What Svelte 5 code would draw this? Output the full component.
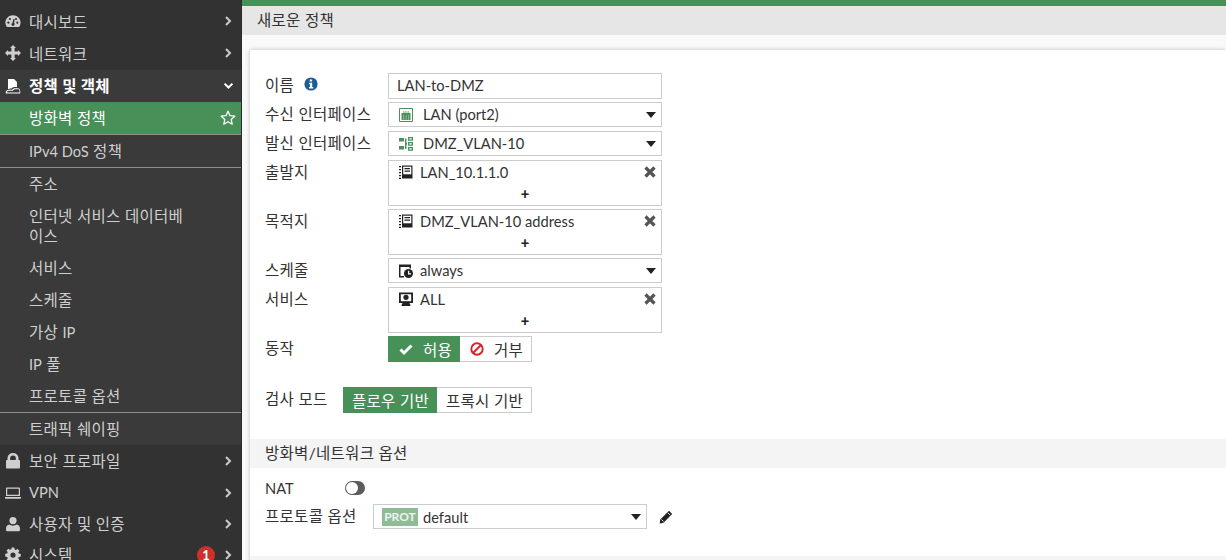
<script lang="ts">
  const topNav = [
    { label: '대시보드', icon: 'dash' },
    { label: '네트워크', icon: 'move' }
  ];
  const subNav = [
    { label: '방화벽 정책', active: true, line: true },
    { before: 'IPv4 DoS', label: '정책', line: true },
    { label: '주소' },
    { label: '인터넷 서비스 데이터베이스', tall: true },
    { label: '서비스' },
    { label: '스케줄' },
    { label: '가상', after: 'IP' },
    { before: 'IP', label: '풀' },
    { label: '프로토콜 옵션', line: true },
    { label: '트래픽 쉐이핑' }
  ];
  const bottomNav = [
    { label: '보안 프로파일', icon: 'lock' },
    { latin: 'VPN', icon: 'laptop' },
    { label: '사용자 및 인증', icon: 'user' },
    { label: '시스템', icon: 'gear', badge: 1 }
  ];
</script>

{#snippet chevron()}
  <svg class="chev" viewBox="0 0 10 14"><path d="M2.5 2 7.5 7 2.5 12" fill="none" stroke="currentColor" stroke-width="2.6"/></svg>
{/snippet}

{#snippet navIcon(name)}
  <svg class="nav-icon" viewBox="0 0 16 16" fill="currentColor">
    {#if name === 'dash'}
      <path d="M8 2.2C3.8 2.2.4 5.500.4 9.700c0 1.500.4 2.800 1.100 3.900.2.200.4.300.7.300h11.600c.3 0 .5-.1.7-.3.700-1.100 1.100-2.400 1.100-3.900 0-4.200-3.400-7.500-7.600-7.500zM3.400 10.800a1.100 1.100 0 1 1 0-2.200 1.100 1.100 0 0 1 0 2.200zm1.500-3.700a1.100 1.100 0 1 1 0-2.200 1.100 1.100 0 0 1 0 2.200zm4.400 4.800a1.500 1.500 0 0 1-2.900-.6c.1-.6.500-1 1-1.100l1-4.200h1.200l-.4 4.300c.5.300.8 1 .1 1.600zm1.700-4.800a1.100 1.100 0 1 1 0-2.200 1.100 1.100 0 0 1 0 2.200zm1.300 3.700a1.100 1.100 0 1 1 0-2.200 1.100 1.100 0 0 1 0 2.200z"/>
    {:else if name === 'move'}
      <path d="M8 0 11 3H9.600V6.400H13V5L16 8 13 11V9.600H9.600V13H11L8 16 5 13H6.400V9.600H3V11L0 8 3 5V6.400H6.400V3H5Z"/>
    {:else if name === 'policy'}
      <path d="M3 1h6l3 3v5H9.500C8 9 7 10 6.500 10.500 5 10.500 3.800 10.800 3 11.500ZM.8 15.500c-.5-2.300 1-3.800 3.400-3.800h3c.8-1 1.700-1.500 3-1.500h2.500c1.500 0 2.500 1 2.500 2.500v2.800zM2 14.400h12.500v-1.700c0-.8-.5-1.400-1.400-1.400h-2.700c-1 0-1.800.5-2.500 1.500H4.200c-1.500 0-2.300.5-2.200 1.600z"/>
    {:else if name === 'lock'}
      <path d="M2.500 7V5a5.500 5 0 0 1 11 0v2h.5c.6 0 1 .4 1 1v6.500c0 .6-.4 1-1 1H2c-.6 0-1-.4-1-1V8c0-.6.4-1 1-1zm2.700 0h5.600V5a2.800 2.500 0 0 0-5.600 0z"/>
    {:else if name === 'laptop'}
      <path d="M2 2.500h12c.6 0 1 .4 1 1V11H1V3.500c0-.6.4-1 1-1zm.2 1.200V9.800h11.600V3.700zM0 12h16v.8c0 .6-.5 1-1 1H1c-.6 0-1-.4-1-1z"/>
    {:else if name === 'user'}
      <path d="M8 1a3.600 3.600 0 1 1 0 7.200A3.600 3.600 0 0 1 8 1zM4.400 8.600C5.400 9.300 6.600 9.800 8 9.800s2.600-.5 3.600-1.200c2 .2 3.400 1.800 3.400 4v1.100c0 1-.7 1.500-1.500 1.500h-11C1.700 15.200 1 14.700 1 13.700v-1.100c0-2.200 1.400-3.800 3.400-4z"/>
    {:else}
      <path d="M6.700.5h2.600l.4 2c.4.100.8.300 1.200.5l1.700-1.100 1.800 1.800-1.100 1.700c.2.400.4.800.5 1.200l2 .4v2.600l-2 .4c-.1.400-.3.800-.5 1.200l1.100 1.700-1.800 1.800-1.700-1.100c-.4.200-.8.400-1.200.5l-.4 2H6.700l-.4-2c-.4-.1-.8-.3-1.200-.5l-1.700 1.100-1.800-1.800 1.100-1.700c-.2-.4-.4-.8-.5-1.200l-2-.4V6.800l2-.4c.1-.4.300-.8.5-1.200L1.600 3.500l1.800-1.800 1.700 1.100c.4-.2.800-.4 1.200-.5zM8 5.500a2.600 2.600 0 1 0 0 5.200 2.600 2.600 0 0 0 0-5.200z"/>
    {/if}
  </svg>
{/snippet}

{#snippet addrIcon()}
  <svg class="ico" viewBox="0 0 14 14">
    <path d="M3 .5h10.500v13H3z" fill="#222"/>
    <path d="M4.200 1.700h8.100v7.600H4.200z" fill="#fff"/>
    <path d="M5.500 3h5.500v1.200H5.500zM5.500 5.500h5.500v1.200H5.500z" fill="#222"/>
    <path d="M0 1h2v1.300H0zM0 4h2v1.300H0zM0 7h2v1.300H0zM0 10h2v1.300H0zM0 12.700h2V14H0z" fill="#222"/>
  </svg>
{/snippet}

{#snippet caret()}
  <svg class="caret" viewBox="0 0 10 6"><path d="M0 0h10L5 6z" fill="#222"/></svg>
{/snippet}

{#snippet multi(label, icon)}
  <div class="row">
    <span class="label">{label}</span>
    <div class="field multi">
      <div class="entry">
        {#if icon === 'addr'}
          {@render addrIcon()}
        {:else}
          <svg class="ico" viewBox="0 0 14 14">
            <path d="M0 .5h14v10.500h-14zM1.800 2.300v7h10.400v-7z" fill="#222"/>
            <circle cx="7" cy="5.300" r="2.600" fill="#222"/>
            <path d="M2.500 14c0-2.500 1.800-4.500 4.500-4.500s4.500 2 4.500 4.500z" fill="#222"/>
          </svg>
        {/if}
        <span class="entry-text lat">{icon === 'addr' ? (label === '출발지' ? 'LAN_10.1.1.0' : 'DMZ_VLAN-10 address') : 'ALL'}</span>
        <svg class="close" viewBox="0 0 12 12"><path d="M1.500 1.500 10.500 10.500M10.500 1.500 1.500 10.500" stroke="#555" stroke-width="3.200" fill="none"/></svg>
      </div>
      <div class="plus lat">+</div>
    </div>
  </div>
{/snippet}

<div class="page">
  <aside class="sidebar">
    {#each topNav as item}
      <div class="nav-item">
        {@render navIcon(item.icon)}
        <span class="nav-label">{item.label}</span>
        {@render chevron()}
      </div>
    {/each}

    <div class="group">
      <div class="nav-item open">
        {@render navIcon('policy')}
        <span class="nav-label raised">정책 및 객체</span>
        <svg class="chev down" viewBox="0 0 14 10"><path d="M2 2 7 7 12 2" fill="none" stroke="currentColor" stroke-width="2.600"/></svg>
      </div>
      {#each subNav as item}
        <div class="sub-item" class:active={item.active} class:line={item.line} class:tall={item.tall}>
          <span class="sub-label raised">{#if item.before}<span class="lat">{item.before}</span>{' '}{/if}{item.label}{#if item.after}{' '}<span class="lat">{item.after}</span>{/if}</span>
          {#if item.active}
            <svg class="star" viewBox="0 0 16 16"><path d="M8 1.300 10 5.700 14.800 6.200 11.200 9.400 12.200 14.200 8 11.700 3.800 14.200 4.800 9.400 1.200 6.200 6 5.700Z" fill="none" stroke="currentColor" stroke-width="1.300" stroke-linejoin="round"/></svg>
          {/if}
        </div>
      {/each}
    </div>

    <div class="bottom">
      {#each bottomNav as item}
        <div class="nav-item">
          {@render navIcon(item.icon)}
          <span class="nav-label raised">{#if item.latin}<span class="lat">{item.latin}</span>{:else}{item.label}{/if}</span>
          {#if item.badge}<span class="badge lat">{item.badge}</span>{/if}
          {@render chevron()}
        </div>
      {/each}
    </div>
  </aside>

  <main class="main">
    <div class="topbar"></div>
    <header class="title">새로운 정책</header>
    <section class="card">
      <div class="form">
        <div class="row">
          <span class="label">이름
            <svg class="info" viewBox="0 0 14 14"><circle cx="7" cy="7" r="6.600" fill="#1c5d94"/><path d="M5.700 2.600h2.400v2H5.700zM5 5.800h3.200v4.300h1v1.400H5v-1.400h1V7.200H5z" fill="#fff"/></svg>
          </span>
          <div class="field text lat">LAN-to-DMZ</div>
        </div>
        <div class="row">
          <span class="label">수신 인터페이스</span>
          <div class="field select">
            <svg class="ico port" viewBox="0 0 14 14">
              <path d="M.5.500h13v13H.5z" fill="#fff" stroke="#4a9358"/>
              <path d="M2.500 5h9v7h-9z" fill="#4a9358"/>
              <path d="M4 3h1.500v2H4zM6.300 3h1.500v2H6.300zM8.600 3h1.500v2H8.600zM4.300 7h.7v5h-.7zM6.700 7h.7v5h-.7zM9 7h.7v5H9z" fill="#9bc5a4"/>
            </svg>
            <span class="sel-text lat">LAN (port2)</span>
            {@render caret()}
          </div>
        </div>
        <div class="row">
          <span class="label">발신 인터페이스</span>
          <div class="field select">
            <svg class="ico port" viewBox="0 0 14 14" fill="#4a9358">
              <path d="M0 1h5v3.500H0zM0 9h5v3.500H0zM6 6h2v1.500H6zM6 1.500h1.500V12H6z"/>
              <path d="M9 0h5v3.800H9zM9 5h5v3.800H9zM9 10h5v3.800H9z"/>
              <path d="M10.300 1.200h2.400v1.400h-2.400zM10.300 6.200h2.400v1.400h-2.400zM10.300 11.200h2.400v1.400h-2.400z" fill="#fff"/>
            </svg>
            <span class="sel-text lat">DMZ_VLAN-10</span>
            {@render caret()}
          </div>
        </div>
        {@render multi('출발지', 'addr')}
        {@render multi('목적지', 'addr')}
        <div class="row">
          <span class="label">스케줄</span>
          <div class="field select">
            <svg class="ico" viewBox="0 0 14 14">
              <path d="M0 .500h12v4h-1.500V3H1.500v9H5v1.500H0z" fill="#222"/>
              <circle cx="9.500" cy="9.500" r="4.500" fill="#222"/>
              <path d="M9 6.800h1.200v2.400H12v1.200H9z" fill="#fff"/>
            </svg>
            <span class="sel-text near lat">always</span>
            {@render caret()}
          </div>
        </div>
        {@render multi('서비스', 'svc')}
        <div class="row">
          <span class="label">동작</span>
          <div class="toggle">
            <div class="seg on">
              <svg class="seg-ico" viewBox="0 0 14 12"><path d="M1.500 6.500 5 10 12.500 2.500" fill="none" stroke="#fff" stroke-width="3"/></svg>
              허용
            </div>
            <div class="seg">
              <svg class="seg-ico" viewBox="0 0 14 14"><circle cx="7" cy="7" r="5.700" fill="none" stroke="#d9232a" stroke-width="1.900"/><path d="M3 11 11 3" stroke="#d9232a" stroke-width="1.900"/></svg>
              거부
            </div>
          </div>
        </div>
        <div class="row inspect">
          <span class="label short">검사 모드</span>
          <div class="toggle">
            <div class="seg on flat">플로우 기반</div>
            <div class="seg flat">프록시 기반</div>
          </div>
        </div>
      </div>

      <div class="section-head">방화벽/네트워크 옵션</div>

      <div class="form options">
        <div class="row nat">
          <span class="label lat nat-label">NAT</span>
          <span class="switch"></span>
        </div>
        <div class="row">
          <span class="label short2">프로토콜 옵션</span>
          <div class="field select prot">
            <span class="prot-tag lat">PROT</span>
            <span class="prot-text lat">default</span>
            {@render caret()}
          </div>
          <svg class="pencil" viewBox="0 0 14 14"><path d="M10 .800 13.200 4 4.500 12.700.600 13.400 1.300 9.500Z" fill="#222"/><path d="M8.900 2.800 11.200 5.100M2.500 9.500 4.500 11.500" stroke="#fff" stroke-width=".9"/></svg>
        </div>
      </div>
      <div class="card-foot"></div>
    </section>
  </main>
</div>

<style>
  :global(body) {
    margin: 0;
    overflow: hidden;
  }

  .page {
    display: flex;
    width: 1226px;
    height: 560px;
    overflow: hidden;
    font-family: Lato, "Noto Sans CJK KR", sans-serif;
    font-size: 15.5px;
    letter-spacing: 0.3px;
    color: #333;
  }

  .lat {
    font-size: 14.67px;
    letter-spacing: 0;
  }

  .sidebar {
    width: 242px;
    flex-shrink: 0;
    height: 560px;
    padding-top: 5px;
    box-sizing: border-box;
    background: #323232;
    border-right: 1px solid #2a2a2a;
    color: #cfcfcf;
    overflow: hidden;
  }

  .nav-item {
    display: flex;
    align-items: center;
    height: 32px;
    padding-left: 5px;
    padding-right: 9px;
  }

  .nav-item.open {
    color: #fff;
    font-weight: 700;
  }

  .nav-icon {
    width: 16px;
    height: 16px;
    flex-shrink: 0;
    margin-right: 8px;
  }

  .nav-label {
    flex: 1;
  }

  .raised {
    padding-bottom: 2px;
  }

  .chev {
    width: 8px;
    height: 12px;
    color: #c8c8c8;
  }

  .chev.down {
    width: 11px;
    height: 8px;
    color: #fff;
    margin-right: -2px;
  }

  .badge {
    width: 18px;
    height: 18px;
    border-radius: 50%;
    background: #d0302a;
    color: #fff;
    font-size: 13px;
    font-weight: 700;
    text-align: center;
    line-height: 18px;
    margin-right: 9px;
  }

  .group {
    margin-top: 1px;
    background: #3a3a3a;
  }

  .bottom .nav-item {
    height: 31px;
  }

  .bottom .nav-item:first-child {
    height: 32px;
  }

  .sub-item {
    display: flex;
    align-items: center;
    height: 32px;
    padding: 0 5px 0 29px;
    color: #cfcfcf;
  }

  .sub-item.line {
    height: 33px;
    border-bottom: 1px solid #8e8e8e;
    box-sizing: border-box;
  }

  .sub-item.tall {
    height: 52px;
    line-height: 20px;
    word-break: break-all;
  }

  .sub-item.tall .sub-label {
    max-width: 160px;
    padding-bottom: 0;
  }

  .sub-item.active {
    background: #479058;
    color: #fff;
  }

  .sub-label {
    flex: 1;
  }

  .star {
    width: 16px;
    height: 16px;
  }

  .main {
    flex: 1;
    min-width: 0;
    background: #f9f9f9;
  }

  .topbar {
    height: 6px;
    background: #479058;
  }

  .title {
    height: 29px;
    line-height: 29px;
    padding-left: 15px;
    background: #e6e6e6;
  }

  .card {
    margin: 15px 0 0 8px;
    background: #fff;
    box-shadow: 0 0 4px rgba(0, 0, 0, 0.25);
    height: 520px;
  }

  .form {
    display: flex;
    flex-direction: column;
    gap: 3px;
    padding: 23px 0 0 15px;
  }

  .row {
    display: flex;
    align-items: flex-start;
  }

  .label {
    display: flex;
    align-items: center;
    width: 123px;
    flex-shrink: 0;
    height: 24px;
    line-height: 24px;
  }

  .label.short {
    width: 78px;
  }

  .label.short2 {
    width: 108px;
  }

  .nat-label {
    padding-top: 2px;
  }

  .info {
    width: 14px;
    height: 14px;
    margin-left: 10px;
    margin-bottom: 2px;
  }

  .field {
    width: 274px;
    box-sizing: border-box;
    border: 1px solid #ccc;
    background: #fff;
  }

  .text {
    height: 26px;
    line-height: 24px;
    padding-left: 8px;
  }

  .select {
    display: flex;
    align-items: center;
    height: 25px;
    margin-bottom: 1px;
    padding: 0 5px 0 10px;
  }

  .ico {
    width: 14px;
    height: 14px;
    flex-shrink: 0;
  }

  .sel-text {
    flex: 1;
    margin-left: 10px;
  }

  .sel-text.near {
    margin-left: 7px;
  }

  .caret {
    width: 10px;
    height: 6px;
    flex-shrink: 0;
  }

  .multi {
    height: 46px;
  }

  .entry {
    display: flex;
    align-items: center;
    height: 22px;
    padding: 0 5px 0 10px;
  }

  .entry-text {
    flex: 1;
    margin-left: 7px;
  }

  .close {
    width: 12px;
    height: 12px;
  }

  .plus {
    height: 22px;
    line-height: 21px;
    text-align: center;
    font-weight: 900;
    color: #222;
  }

  .toggle {
    display: flex;
    height: 26px;
  }

  .seg {
    display: flex;
    align-items: center;
    gap: 10px;
    box-sizing: border-box;
    width: 72px;
    height: 26px;
    padding-left: 10px;
    border: 1px solid #ccc;
    border-left: none;
    background: #fff;
  }

  .seg.on {
    background: #479058;
    border: none;
    color: #fff;
    padding-left: 11px;
  }

  .seg.flat {
    width: 95px;
    padding-left: 9px;
  }

  .seg.on.flat {
    width: 94px;
    padding-left: 9px;
  }

  .seg-ico {
    width: 14px;
    height: 14px;
    flex-shrink: 0;
  }

  .inspect {
    margin-top: 22px;
  }

  .section-head {
    height: 29px;
    line-height: 29px;
    margin-top: 26px;
    padding-left: 15px;
    background: #f4f4f4;
  }

  .options {
    padding-top: 8px;
    gap: 4px;
  }

  .nat {
    height: 24px;
    align-items: center;
  }

  .switch {
    display: block;
    position: relative;
    width: 20px;
    height: 14px;
    margin-left: -43px;
    border-radius: 7px;
    background: #5c5c5c;
  }

  .switch::after {
    content: "";
    position: absolute;
    left: 1px;
    top: 1px;
    width: 12px;
    height: 12px;
    border-radius: 50%;
    background: #fff;
  }

  .prot {
    padding-left: 8px;
  }

  .prot-tag {
    width: 36px;
    height: 18px;
    line-height: 18px;
    text-align: center;
    background: #8fbc97;
    color: #eef5ef;
    font-size: 12px;
    font-weight: 700;
    flex-shrink: 0;
  }

  .prot-text {
    flex: 1;
    margin-left: 5px;
    padding-top: 1px;
  }

  .pencil {
    width: 14px;
    height: 14px;
    margin: 6px 0 0 12px;
  }

  .card-foot {
    height: 4px;
    margin-top: 26px;
    background: #f4f4f4;
  }
</style>
